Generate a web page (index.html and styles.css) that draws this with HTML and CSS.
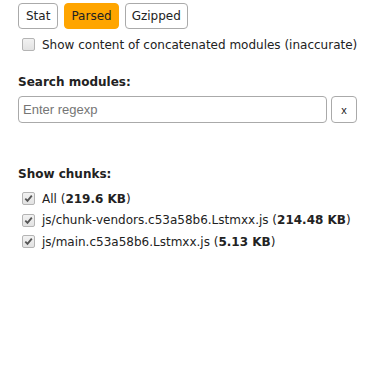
FILE: index.html
```html
<!DOCTYPE html>
<html>
<head>
<meta charset="utf-8">
<link rel="stylesheet" href="styles.css">
</head>
<body>
<div class="sidebar">
  <div class="switcher">
    <button class="btn">Stat</button>
    <button class="btn active">Parsed</button>
    <button class="btn">Gzipped</button>
  </div>
  <label class="check concat"><input type="checkbox"><span>Show content of concatenated modules (inaccurate)</span></label>

  <div class="group">
    <div class="title">Search modules:</div>
    <div class="search">
      <input class="search-input" type="text" placeholder="Enter regexp">
      <button class="btn clear">x</button>
    </div>
  </div>

  <div class="group chunks">
    <div class="title">Show chunks:</div>
    <label class="check"><input type="checkbox" checked><span>All (<b>219.6 KB</b>)</span></label>
    <label class="check"><input type="checkbox" checked><span>js/chunk-vendors.c53a58b6.Lstmxx.js (<b>214.48 KB</b>)</span></label>
    <label class="check"><input type="checkbox" checked><span>js/main.c53a58b6.Lstmxx.js (<b>5.13 KB</b>)</span></label>
  </div>
</div>
</body>
</html>
```

FILE: styles.css
```css
html, body {
  margin: 0;
  padding: 0;
  background: #fff;
}
.sidebar {
  padding: 3px 0 0 18px;
  font: 12px "DejaVu Sans", Verdana, sans-serif;
  color: #222;
}
.switcher {
  display: flex;
  gap: 6px;
}
.btn {
  font: 12px "DejaVu Sans", Verdana, sans-serif;
  color: #222;
  background: #fff;
  border: 1px solid #aaa;
  border-radius: 4px;
  height: 26px;
  padding: 0 6px;
  cursor: pointer;
}
.btn:first-child {
  padding: 0 7px;
}
.btn.active {
  background: #ffa500;
  border-color: #ffa500;
}
.check {
  display: flex;
  align-items: center;
  height: 21px;
  color: #222;
}
.check input {
  appearance: none;
  -webkit-appearance: none;
  margin: 0 7px 0 4px;
  width: 13px;
  height: 13px;
  box-sizing: border-box;
  border: 1px solid #b4b4b4;
  border-radius: 2px;
  background: linear-gradient(#f2f2f2, #e2e2e2);
}
.check input:checked {
  background:
    url("data:image/svg+xml;utf8,<svg xmlns='http://www.w3.org/2000/svg' viewBox='0 0 11 11'><path d='M2.3 5.6 L4.5 7.9 L8.8 2.6' fill='none' stroke='%23555' stroke-width='1.8'/></svg>") center / 11px 11px no-repeat,
    linear-gradient(#f2f2f2, #e2e2e2);
}
.concat {
  margin-top: 5px;
}
.title {
  font-weight: bold;
  margin-top: 20px;
  margin-bottom: 7px;
}
.search {
  display: flex;
  gap: 4px;
  width: 339px;
}
.search-input {
  flex: 1;
  height: 27px;
  box-sizing: border-box;
  border: 1px solid #aaa;
  border-radius: 4px;
  padding: 0 4px;
  font: 13px "Liberation Sans", Arial, sans-serif;
}
.search-input::placeholder {
  color: #757575;
}
.clear {
  height: 27px;
  width: 26px;
  padding: 0;
  font: 11px "Liberation Sans", Arial, sans-serif;
}
.chunks .title {
  margin-top: 44px;
  margin-bottom: 7px;
}
.chunks .check {
  height: 21.5px;
}
b {
  font-weight: bold;
}
```
